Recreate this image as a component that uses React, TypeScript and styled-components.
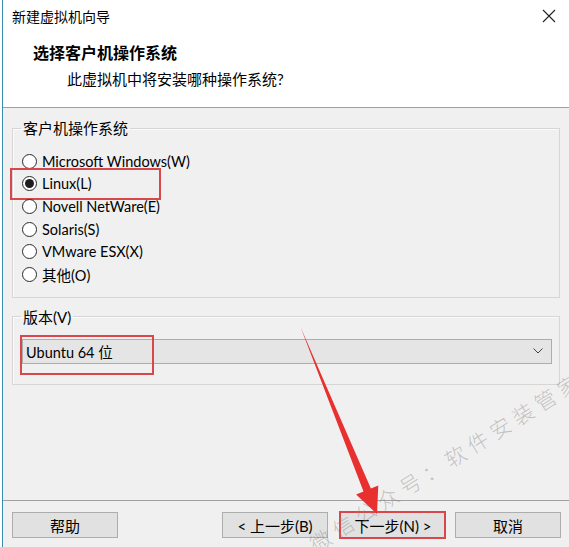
import React from 'react'
import styled, { createGlobalStyle } from 'styled-components'

const GlobalStyle = createGlobalStyle`
  html, body {
    margin: 0;
    padding: 0;
    background: #fff;
  }
  body {
    font-family: Lato, 'Noto Sans CJK SC', sans-serif;
    color: #000;
  }
  * { box-sizing: border-box; }
`

const MARK = '#d8474b'

const Frame = styled.div`
  position: relative;
  width: 569px;
  height: 547px;
  overflow: hidden;
  background: #fff;
  padding-left: 2px;
`

const Window = styled.div`
  height: 100%;
  display: flex;
  flex-direction: column;
  border-left: 1px solid #3b8db0;
  background: #f0f0f0;
`

const TitleBar = styled.div`
  height: 35px;
  flex: none;
  display: flex;
  align-items: center;
  justify-content: space-between;
  padding: 0 13px 3px 9px;
  background: #fff;
  font-size: 14px;
`

const Header = styled.div`
  height: 73px;
  flex: none;
  background: #fff;
  border-bottom: 1px solid #a0a0a0;
  padding: 8px 0 0 30px;
`

const Heading = styled.div`
  font-size: 16px;
  font-weight: 700;
  line-height: 20px;
`

const Subheading = styled.div`
  font-size: 15px;
  line-height: 20px;
  margin: 6px 0 0 34px;
`

const Body = styled.div`
  flex: 1;
  padding: 10px 9px 0;
`

const Group = styled.fieldset<{ $gap?: number; $bottom?: number }>`
  margin: ${p => p.$gap ?? 0}px 0 0;
  border: 1px solid #d6d6d6;
  box-shadow: inset 1px 1px 0 #fbfbfb;
  padding: 12px 7px ${p => p.$bottom ?? 11}px 9px;
`

const Legend = styled.legend`
  font-size: 15px;
  line-height: 20px;
  padding: 0 2px;
  margin-left: -1px;
`

const RadioList = styled.div`
  display: flex;
  flex-direction: column;
`

const RadioRow = styled.label<{ $marked?: boolean }>`
  position: relative;
  height: 22.6px;
  display: flex;
  align-items: center;
  gap: 5px;
  font-size: 14.5px;

  ${p =>
    p.$marked &&
    `
    &::after {
      content: '';
      position: absolute;
      left: -12px;
      top: 50%;
      width: 147px;
      height: 28px;
      transform: translateY(-50%);
      border: 2.5px solid ${MARK};
    }
  `}
`

const RadioDot = styled.span<{ $checked?: boolean }>`
  width: 15px;
  height: 15px;
  flex: none;
  border-radius: 50%;
  border: 1px solid #2a2a2a;
  background: #fff;
  display: flex;
  align-items: center;
  justify-content: center;

  &::before {
    content: '';
    width: 9px;
    height: 9px;
    border-radius: 50%;
    background: ${p => (p.$checked ? '#1e1e1e' : 'transparent')};
  }
`

const Select = styled.div`
  position: relative;
  height: 25px;
  display: flex;
  align-items: center;
  justify-content: space-between;
  padding: 0 8px 0 3px;
  background: #e5e5e5;
  border: 1px solid #adadad;
  font-size: 14.5px;

  &::after {
    content: '';
    position: absolute;
    left: -3px;
    top: -5px;
    width: 130px;
    height: 36px;
    border: 2.5px solid ${MARK};
  }
`

const Footer = styled.div`
  height: 47px;
  flex: none;
  border-top: 1px solid #a0a0a0;
  display: flex;
  align-items: flex-start;
  padding: 11px 8px 0 9px;
`

const Button = styled.button<{ $marked?: boolean; $push?: boolean; $gap?: number }>`
  position: relative;
  width: 106px;
  height: 26px;
  margin-left: ${p => (p.$push ? 'auto' : `${p.$gap ?? 0}px`)};
  background: #e1e1e1;
  border: 1px solid #adadad;
  font-family: Lato, 'Noto Sans CJK SC', sans-serif;
  font-size: 15px;
  color: #000;
  padding: 0;

  ${p =>
    p.$marked &&
    `
    &::after {
      content: '';
      position: absolute;
      inset: -2px -1px -2px -2px;
      border: 2.5px solid ${MARK};
    }
  `}
`

const Overlay = styled.svg`
  position: absolute;
  left: 0;
  top: 0;
  pointer-events: none;
`

const Watermark = styled.div`
  position: absolute;
  left: 446px;
  top: 461px;
  transform: translate(-50%, -50%) rotate(-32deg);
  white-space: nowrap;
  font-family: 'Noto Sans CJK SC', sans-serif;
  font-weight: 300;
  font-size: 21px;
  letter-spacing: 5.5px;
  color: rgba(135, 135, 135, 0.45);
  pointer-events: none;
`

const systems = [
  'Microsoft Windows(W)',
  'Linux(L)',
  'Novell NetWare(E)',
  'Solaris(S)',
  'VMware ESX(X)',
  '其他(O)',
]

export default function App() {
  return (
    <Frame>
      <GlobalStyle />
      <Window>
        <TitleBar>
          <span>新建虚拟机向导</span>
          <svg width="14" height="14" viewBox="0 0 14 14">
            <path d="M1 1 L13 13 M13 1 L1 13" stroke="#222" strokeWidth="1.1" />
          </svg>
        </TitleBar>
        <Header>
          <Heading>选择客户机操作系统</Heading>
          <Subheading>此虚拟机中将安装哪种操作系统?</Subheading>
        </Header>
        <Body>
          <Group>
            <Legend>客户机操作系统</Legend>
            <RadioList>
              {systems.map((s, i) => (
                <RadioRow key={s} $marked={i === 1}>
                  <RadioDot $checked={i === 1} />
                  {s}
                </RadioRow>
              ))}
            </RadioList>
          </Group>
          <Group $gap={9} $bottom={20}>
            <Legend>版本(V)</Legend>
            <Select>
              <span>Ubuntu 64 位</span>
              <svg width="10" height="6" viewBox="0 0 10 6">
                <polyline points="0.5,0.5 5,5 9.5,0.5" fill="none" stroke="#444" strokeWidth="1" />
              </svg>
            </Select>
          </Group>
        </Body>
        <Footer>
          <Button>帮助</Button>
          <Button $push>&lt; 上一步(B)</Button>
          <Button $gap={12} $marked>下一步(N) &gt;</Button>
          <Button $gap={9}>取消</Button>
        </Footer>
      </Window>
      <Watermark>微信公众号：软件安装管家</Watermark>
      <Overlay width="569" height="547" viewBox="0 0 569 547">
        <polygon
          points="300.5,327 370.9,488.5 378.3,485.5 377,514 356.1,494.5 363.5,491.5"
          fill="#e8302f"
        />
      </Overlay>
    </Frame>
  )
}
